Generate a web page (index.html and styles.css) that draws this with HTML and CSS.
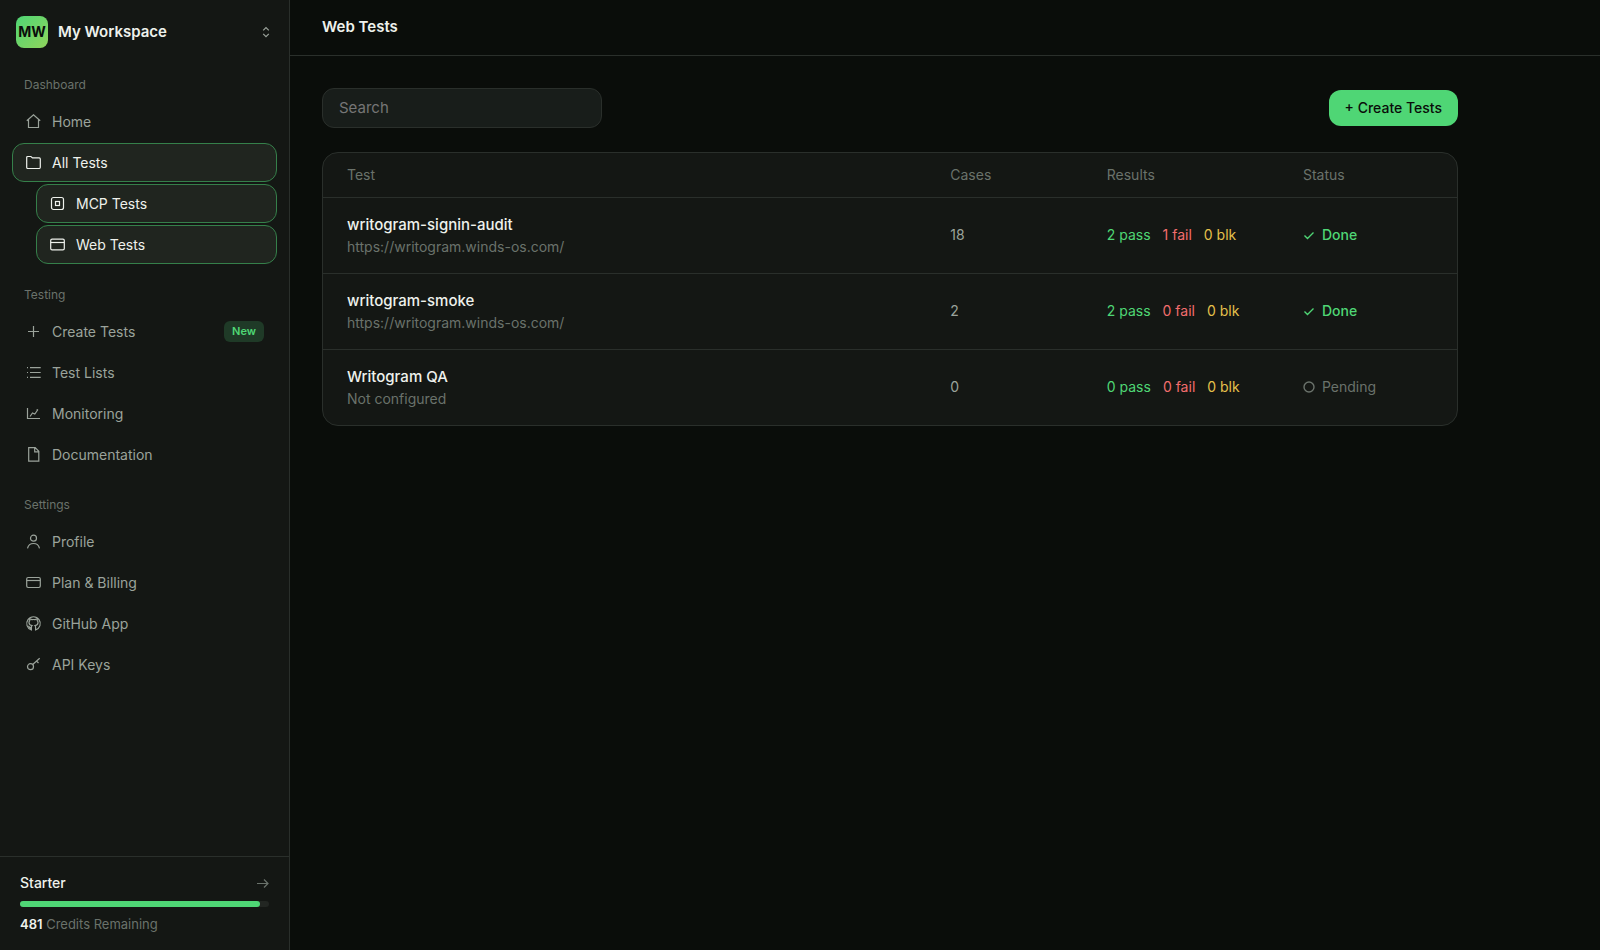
FILE: index.html
```html
<!DOCTYPE html>
<html lang="en">
<head>
<meta charset="utf-8">
<meta name="viewport" content="width=device-width, initial-scale=1">
<title>Web Tests</title>
<link rel="stylesheet" href="styles.css">
</head>
<body>
<div class="app">
  <aside class="sidebar">
    <button class="workspace" type="button">
      <span class="avatar">MW</span>
      <span class="workspace-name">My Workspace</span>
      <svg class="icon" viewBox="0 0 16 16"><path d="M5.200 6.300 8 3.500l2.800 2.800M5.200 9.900 8 12.700l2.800-2.800"/></svg>
    </button>
    <nav class="nav">
      <section class="group">
        <h2 class="group-title">Dashboard</h2>
        <a class="item" href="#"><svg class="icon" viewBox="0 0 17 17"><path d="M1.800 7.800 8.500 1.700l6.700 6.100M3.500 6.500v8h10v-8"/></svg>Home</a>
        <a class="item active" href="#"><svg class="icon" viewBox="0 0 17 17"><path d="M1.700 13.300V3.500q0-1 1-1h3.200l1.600 1.400h6.800q1 0 1 1v8.400q0 1.200-1 1.200H2.700q-1 0-1-1.200z"/></svg>All Tests</a>
        <a class="item sub active" href="#"><svg class="icon" viewBox="0 0 17 17"><rect x="2.500" y="2.500" width="12" height="12" rx="2"/><rect x="6.500" y="6.500" width="4" height="4"/></svg>MCP Tests</a>
        <a class="item sub active" href="#"><svg class="icon" viewBox="0 0 17 17"><rect x="1.700" y="3.200" width="13.600" height="10.600" rx="1.400"/><path d="M1.700 6.500h13.600"/></svg>Web Tests</a>
      </section>
      <section class="group">
        <h2 class="group-title">Testing</h2>
        <a class="item" href="#"><svg class="icon" viewBox="0 0 17 17"><path d="M8.500 3v11M3 8.500h11"/></svg>Create Tests<span class="badge">New</span></a>
        <a class="item" href="#"><svg class="icon" viewBox="0 0 17 17"><path d="M5 3.700h10.700M5 8.500h10.700M5 13.300h10.700M2 3.700h1M2 8.500h1M2 13.300h1"/></svg>Test Lists</a>
        <a class="item" href="#"><svg class="icon" viewBox="0 0 17 17"><path d="M2.500 3v10.500h12.500M5 11.500l2.500-3.500 2.300 1L13 4.500M11.500 5.300 13 4.500"/></svg>Monitoring</a>
        <a class="item" href="#"><svg class="icon" viewBox="0 0 17 17"><path d="M3.700 1.700h6.500l3.600 3.600v9.900H3.700zM9.700 1.700v4.100h4.100"/></svg>Documentation</a>
      </section>
      <section class="group">
        <h2 class="group-title">Settings</h2>
        <a class="item" href="#"><svg class="icon" viewBox="0 0 17 17"><circle cx="8.500" cy="5.200" r="3"/><path d="M2.500 15.300c.7-3 3-4.800 6-4.800s5.300 1.800 6 4.800"/></svg>Profile</a>
        <a class="item" href="#"><svg class="icon" viewBox="0 0 17 17"><rect x="1.700" y="3.500" width="13.600" height="10" rx="1.400"/><path d="M1.700 6.500h13.600"/></svg>Plan &amp; Billing</a>
        <a class="item" href="#"><svg class="icon" viewBox="0 0 17 17"><path d="M6.400 15A6.800 6.800 0 1 1 10.600 15v-2.700c0-.8-.2-1.300-.6-1.700 2-.2 3-1.200 3-3.100 0-.8-.3-1.500-.8-2 .1-.5.1-1.100-.1-1.600-.8 0-1.500.4-2.100.8a6 6 0 0 0-3 0c-.6-.4-1.300-.8-2.100-.8-.2.500-.2 1.100-.1 1.600-.5.500-.8 1.200-.8 2 0 1.900 1 2.900 3 3.100-.4.400-.6.900-.6 1.500z"/><path class="solid" d="M2.700 10.500c1.600.1 1.600 1.600 3.700 1.600V15a7 7 0 0 1-3.700-4.500z"/></svg>GitHub App</a>
        <a class="item" href="#"><svg class="icon" viewBox="0 0 17 17"><circle cx="5.500" cy="10.700" r="3"/><path d="m7.700 8.500 7-6.200M11.500 5l2 2"/></svg>API Keys</a>
      </section>
    </nav>
    <footer class="plan">
      <a class="plan-link" href="#">Starter
        <svg class="icon" viewBox="0 0 16 16"><path d="M4 8.500h11M11 4.500l4 4-4 4"/></svg>
      </a>
      <div class="meter"><div class="meter-fill" style="width:96.2%"></div></div>
      <p class="credits"><strong>481</strong> Credits Remaining</p>
    </footer>
  </aside>
  <main class="main">
    <header class="topbar"><h1 class="title">Web Tests</h1></header>
    <div class="content">
      <div class="toolbar">
        <input class="search" type="text" placeholder="Search" aria-label="Search">
        <button class="create" type="button">+ Create Tests</button>
      </div>
      <div class="card">
        <table class="tests">
          <thead>
            <tr><th class="col-test">Test</th><th class="col-cases">Cases</th><th class="col-results">Results</th><th>Status</th></tr>
          </thead>
          <tbody>
            <tr>
              <td class="test"><div class="name">writogram-signin-audit</div><div class="url">https://writogram.winds-os.com/</div></td>
              <td>18</td>
              <td><div class="results"><span class="pass">2 pass</span><span class="fail">1 fail</span><span class="blk">0 blk</span></div></td>
              <td><span class="status done"><svg class="mark" viewBox="0 0 12 12"><path d="m1.500 6.500 3 3 6-6"/></svg>Done</span></td>
            </tr>
            <tr>
              <td class="test"><div class="name">writogram-smoke</div><div class="url">https://writogram.winds-os.com/</div></td>
              <td>2</td>
              <td><div class="results"><span class="pass">2 pass</span><span class="fail">0 fail</span><span class="blk">0 blk</span></div></td>
              <td><span class="status done"><svg class="mark" viewBox="0 0 12 12"><path d="m1.500 6.500 3 3 6-6"/></svg>Done</span></td>
            </tr>
            <tr>
              <td class="test"><div class="name">Writogram QA</div><div class="url">Not configured</div></td>
              <td>0</td>
              <td><div class="results"><span class="pass">0 pass</span><span class="fail">0 fail</span><span class="blk">0 blk</span></div></td>
              <td><span class="status"><svg class="mark" viewBox="0 0 12 12"><circle cx="6" cy="6" r="5"/></svg>Pending</span></td>
            </tr>
          </tbody>
        </table>
      </div>
    </div>
  </main>
</div>
</body>
</html>
```
FILE: styles.css
```css
:root {
  --bg: #0a0d0a;
  --panel: #141714;
  --line: #2a2f2b;
  --text: #eef1ec;
  --soft: #9ba39b;
  --dim: #6a726b;
  --green: #4fd675;
}

* { box-sizing: border-box; }

body {
  margin: 0;
  background: var(--bg);
  color: var(--text);
  font: 14px/21px Inter, "Liberation Sans", sans-serif;
}

h1, h2, p { margin: 0; }
a { color: inherit; text-decoration: none; }
button, input { font: inherit; }

.app { display: flex; min-height: 100vh; }

.icon {
  width: 16px;
  height: 16px;
  flex: none;
  fill: none;
  stroke: currentColor;
  stroke-width: 1.2;
}
.icon .solid { fill: currentColor; stroke: none; }

.sidebar {
  display: flex;
  flex-direction: column;
  width: 290px;
  flex: none;
  background: var(--panel);
  border-right: 1px solid var(--line);
}

.workspace {
  display: flex;
  align-items: center;
  gap: 10px;
  padding: 16px 15px 16px 16px;
  border: 0;
  background: none;
  color: var(--soft);
  text-align: left;
}

.avatar {
  width: 32px;
  height: 32px;
  flex: none;
  border-radius: 8px;
  background: linear-gradient(135deg, #4fd675, #90d45c);
  color: #0a0d0a;
  font-size: 14px;
  font-weight: 700;
  line-height: 32px;
  text-align: center;
}

.workspace-name {
  flex: 1;
  color: var(--text);
  font-size: 15px;
  font-weight: 600;
  line-height: 22px;
}

.nav {
  display: flex;
  flex: 1;
  flex-direction: column;
  gap: 22px;
  padding: 12px;
}

.group { display: flex; flex-direction: column; gap: 2px; }

.group-title {
  padding: 0 12px;
  margin-bottom: 6px;
  color: var(--dim);
  font-size: 12px;
  font-weight: 400;
  line-height: 18px;
}

.item {
  display: flex;
  align-items: center;
  gap: 10px;
  padding: 8px 12px;
  border: 1px solid transparent;
  border-radius: 12px;
  color: var(--soft);
}

.item .icon { width: 17px; height: 17px; }
.item.sub { margin-left: 24px; }
.item.active { background: #20251f; border-color: #35804a; color: var(--text); }

.badge {
  margin-left: auto;
  padding: 2px 8px;
  border-radius: 6px;
  background: #1f3a27;
  color: var(--green);
  font-size: 11px;
  font-weight: 600;
  line-height: 17px;
}

.plan { padding: 16px 20px; border-top: 1px solid var(--line); }

.plan-link {
  display: flex;
  align-items: center;
  justify-content: space-between;
  font-weight: 500;
  line-height: 20px;
}
.plan-link .icon { color: var(--dim); }

.meter {
  height: 6px;
  margin: 8px 0;
  border-radius: 3px;
  background: #222622;
}
.meter-fill { height: 100%; border-radius: 3px; background: var(--green); }

.credits { color: var(--dim); font-size: 13px; line-height: 19px; }
.credits strong { color: var(--text); font-weight: 600; }

.main { flex: 1; min-width: 0; }

.topbar {
  padding: 16px 32px 17px;
  border-bottom: 1px solid var(--line);
}
.title { font-size: 15px; font-weight: 600; line-height: 22px; }

.content { max-width: 1200px; padding: 32px; }

.toolbar {
  display: flex;
  align-items: center;
  justify-content: space-between;
  margin-bottom: 24px;
}

.search {
  width: 280px;
  height: 40px;
  padding: 0 16px 2px;
  border: 1px solid var(--line);
  border-radius: 12px;
  background: #181d1a;
  color: var(--text);
  font-size: 15px;
}
.search::placeholder { color: #757575; }

.create {
  height: 36px;
  padding: 0 16px 1px;
  border: 0;
  border-radius: 12px;
  background: var(--green);
  color: #0a0d0a;
  font-weight: 500;
}

.card {
  overflow: hidden;
  border: 1px solid var(--line);
  border-radius: 16px;
  background: var(--panel);
}

.tests { width: 100%; border-collapse: collapse; table-layout: fixed; }
.tests th, .tests td { padding: 15px 24px 17px; text-align: left; vertical-align: middle; }
.tests th { padding: 11px 24px 12px; color: var(--dim); font-weight: 400; }
.tests td { color: var(--soft); border-top: 1px solid var(--line); }
.tests .test { padding: 16px 24px; }

.col-test { width: 53.2%; }
.col-cases { width: 13.8%; }
.col-results { width: 17.3%; }

.name { color: var(--text); font-size: 15px; font-weight: 500; line-height: 22px; }
.url { color: var(--dim); }

.results { display: flex; gap: 12px; white-space: nowrap; }
.pass { color: var(--green); }
.fail { color: #f26d6d; }
.blk { color: #e5c04b; }

.status { display: flex; align-items: center; gap: 7px; color: var(--dim); }
.status.done { color: var(--green); font-weight: 500; }
.mark { width: 12px; height: 12px; fill: none; stroke: currentColor; stroke-width: 1.4; }
```
